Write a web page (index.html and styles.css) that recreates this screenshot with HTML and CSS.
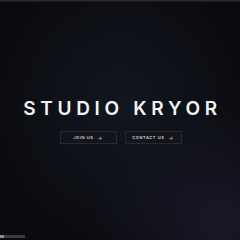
FILE: index.html
```html
<!DOCTYPE html>
<html lang="en">
<head>
    <meta charset="UTF-8">
    <meta name="viewport" content="width=device-width, initial-scale=1.0">
    <title>Studio Kryor</title>
    <link rel="stylesheet" href="styles.css">
</head>
<body>
    <div class="topline"></div>
    <main class="hero">
        <h1 class="title">STUDIO KRYOR</h1>
        <div class="actions">
            <a class="btn" href="#">JOIN US <span class="arrow">&rarr;</span></a>
            <a class="btn" href="#">CONTACT US <span class="arrow">&rarr;</span></a>
        </div>
    </main>
    <div class="corner"><span class="corner-dot"></span><span class="corner-bar"></span></div>
</body>
</html>
```
FILE: styles.css
```css
html, body {
    margin: 0;
    height: 100%;
}

body {
    display: flex;
    flex-direction: column;
    font-family: Inter, "Noto Sans", sans-serif;
    color: #f2f3f5;
    background:
        radial-gradient(ellipse 55% 50% at 92% 92%, #181828 0%, rgba(24, 24, 40, 0) 100%),
        radial-gradient(ellipse 55% 60% at 50% 45%, #121620 0%, #0d0f15 70%, #0a0b0e 100%);
    overflow: hidden;
}

.topline {
    height: 1px;
    background: #2b2d31;
    border-bottom: 1px solid #15171b;
}

.hero {
    flex: 1;
    display: flex;
    flex-direction: column;
    align-items: center;
    padding-top: 97px;
}

.title {
    margin: 0 0 0 5px;
    font-size: 19px;
    font-weight: 600;
    letter-spacing: 4.7px;
    line-height: 20px;
}

.actions {
    display: flex;
    gap: 8px;
    margin-top: 12px;
    padding-left: 1px;
}

.btn {
    box-sizing: border-box;
    display: flex;
    align-items: center;
    justify-content: center;
    gap: 4px;
    width: 57px;
    height: 13px;
    border: 1px solid #262930;
    background: #13151b;
    color: #d6d8de;
    font-size: 4px;
    font-weight: 600;
    letter-spacing: 0.6px;
    text-decoration: none;
}

.arrow {
    font-size: 5px;
    color: #a9acb4;
}

.corner {
    position: absolute;
    left: 0;
    bottom: 2px;
    display: flex;
    align-items: center;
    height: 3px;
}

.corner-dot {
    width: 4px;
    height: 3px;
    background: #8a8c90;
}

.corner-bar {
    width: 21px;
    height: 3px;
    background: #3a3c40;
}
```
